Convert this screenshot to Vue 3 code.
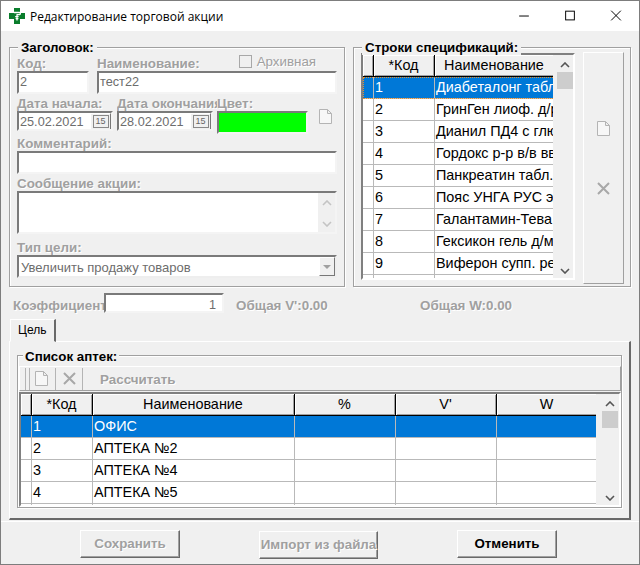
<script setup>
const specRows = [
  ['1', 'Диабеталонг табл. 30 мг'],
  ['2', 'ГринГен лиоф. д/р-ра'],
  ['3', 'Дианил ПД4 с глюкозой'],
  ['4', 'Гордокс р-р в/в введ.'],
  ['5', 'Панкреатин табл. п/о'],
  ['6', 'Пояс УНГА РУС эласт.'],
  ['7', 'Галантамин-Тева капс.'],
  ['8', 'Гексикон гель д/местн.'],
  ['9', 'Виферон супп. рект.'],
  ['', '']
]
const shopRows = [
  ['1', 'ОФИС'],
  ['2', 'АПТЕКА №2'],
  ['3', 'АПТЕКА №4'],
  ['4', 'АПТЕКА №5'],
  ['', '']
]
</script>

<template>
  <div class="window">
    <header class="titlebar">
      <svg class="app-icon" viewBox="0 0 16 16" width="16" height="16">
        <path d="M5 0h6v5h5v6h-5v5H5v-5H0V5h5z" fill="#0a7d2c" />
        <path d="M5 4.5h5.5c1.2 0 1.2 2.2 0 2.2H7.5M8 6.5v6M6.2 8.6h3.4M6.6 10.6h2.8" fill="none" stroke="#fff" stroke-width="1.3" />
      </svg>
      <span class="title">Редактирование торговой акции</span>
      <div class="caption">
        <svg viewBox="0 0 46 32" width="46" height="31"><path d="M18 15.5h10" stroke="#000" fill="none" /></svg>
        <svg viewBox="0 0 46 32" width="46" height="31"><rect x="18.5" y="10.5" width="9" height="9" stroke="#000" fill="none" /></svg>
        <svg viewBox="0 0 46 32" width="46" height="31"><path d="M18 10l10 10M28 10L18 20" stroke="#000" fill="none" /></svg>
      </div>
    </header>

    <div class="top">
      <section class="group head-group">
        <span class="legend">Заголовок:</span>
        <div class="row">
          <div class="field w72">
            <label class="lbl">Код:</label>
            <div class="edit">2</div>
          </div>
          <div class="field w240">
            <div class="name-label">
              <label class="lbl">Наименование:</label>
              <span class="archive"><i class="check"></i>Архивная</span>
            </div>
            <div class="edit">тест22</div>
          </div>
        </div>
        <div class="row dates">
          <div class="field w96">
            <label class="lbl">Дата начала:</label>
            <div class="edit date">25.02.2021<span class="cal"><b>15</b></span></div>
          </div>
          <div class="field w96">
            <label class="lbl nowrap">Дата окончания:</label>
            <div class="edit date">28.02.2021<span class="cal"><b>15</b></span></div>
          </div>
          <div class="field w91">
            <label class="lbl">Цвет:</label>
            <div class="edit colour"><span></span></div>
          </div>
          <svg class="doc doc-color" viewBox="0 0 13 15" width="13" height="15">
            <path d="M.5.5h8l4 4v10H.5zM8.5.5v4h4" fill="#f7f7f7" stroke="#b4b4b4" />
          </svg>
        </div>
        <div class="field">
          <label class="lbl">Комментарий:</label>
          <div class="edit"></div>
        </div>
        <div class="field">
          <label class="lbl">Сообщение акции:</label>
          <div class="edit memo">
            <span class="memo-text"></span>
            <span class="memo-bar">
              <svg viewBox="0 0 10 6" width="10" height="6"><path d="M1 5l4-4 4 4" fill="none" stroke="#c4c4c4" stroke-width="1.6" /></svg>
              <svg viewBox="0 0 10 6" width="10" height="6"><path d="M1 1l4 4 4-4" fill="none" stroke="#c4c4c4" stroke-width="1.6" /></svg>
            </span>
          </div>
        </div>
        <div class="field goal">
          <label class="lbl">Тип цели:</label>
          <div class="edit select">Увеличить продажу товаров<span class="drop"><i></i></span></div>
        </div>
      </section>

      <section class="group spec-group">
        <span class="legend">Строки спецификаций:</span>
        <div class="grid spec-grid">
          <div class="grid-body">
            <table>
              <colgroup><col class="c-ind" /><col class="c-code" /><col class="c-spec-name" /></colgroup>
              <thead><tr><th></th><th>*Код</th><th>Наименование</th></tr></thead>
              <tbody>
                <tr v-for="(r, i) in specRows" :key="i" :class="{ sel: i === 0, focus: i === 0 }">
                  <td></td><td>{{ r[0] }}</td><td>{{ r[1] }}</td>
                </tr>
              </tbody>
            </table>
          </div>
          <div class="vbar">
            <svg viewBox="0 0 10 6" width="10" height="6"><path d="M1 5l4-4 4 4" fill="none" stroke="#555" stroke-width="1.6" /></svg>
            <span class="thumb"></span>
            <svg class="down" viewBox="0 0 10 6" width="10" height="6"><path d="M1 1l4 4 4-4" fill="none" stroke="#555" stroke-width="1.6" /></svg>
          </div>
        </div>
        <div class="side-tools">
          <svg viewBox="0 0 13 15" width="13" height="15">
            <path d="M.5.5h8l4 4v10H.5zM8.5.5v4h4" fill="#f7f7f7" stroke="#b4b4b4" />
          </svg>
          <svg viewBox="0 0 13 13" width="13" height="13">
            <path d="M1 1l11 11M12 1L1 12" fill="none" stroke="#a8a8a8" stroke-width="2" />
          </svg>
        </div>
      </section>
    </div>

    <div class="coef-row">
      <label class="lbl coef-label">Коэффициент</label>
      <div class="edit coef">1</div>
      <span class="lbl total-v">Общая V':0.00</span>
      <span class="lbl total-w">Общая W:0.00</span>
    </div>

    <div class="tabs"><span class="tab">Цель</span></div>
    <section class="page">
      <div class="group shop-group">
        <span class="legend">Список аптек:</span>
        <div class="toolbar">
          <i class="grip"></i>
          <svg viewBox="0 0 13 15" width="13" height="15">
            <path d="M.5.5h8l4 4v10H.5zM8.5.5v4h4" fill="#f7f7f7" stroke="#b4b4b4" />
          </svg>
          <i class="sep"></i>
          <svg viewBox="0 0 13 13" width="13" height="13">
            <path d="M1 1l11 11M12 1L1 12" fill="none" stroke="#a8a8a8" stroke-width="2" />
          </svg>
          <i class="sep"></i>
          <span class="lbl calc">Рассчитать</span>
        </div>
        <div class="grid shop-grid">
          <div class="grid-body">
            <table>
              <colgroup><col class="c-ind" /><col class="c-code" /><col class="c-name" /><col class="c-num" /><col class="c-num" /><col class="c-num" /></colgroup>
              <thead><tr><th></th><th>*Код</th><th>Наименование</th><th>%</th><th>V'</th><th>W</th></tr></thead>
              <tbody>
                <tr v-for="(r, i) in shopRows" :key="i" :class="{ sel: i === 0 }">
                  <td></td><td>{{ r[0] }}</td><td>{{ r[1] }}</td><td></td><td></td><td></td>
                </tr>
              </tbody>
            </table>
          </div>
          <div class="vbar">
            <svg viewBox="0 0 10 6" width="10" height="6"><path d="M1 5l4-4 4 4" fill="none" stroke="#555" stroke-width="1.6" /></svg>
            <span class="thumb"></span>
            <svg class="down" viewBox="0 0 10 6" width="10" height="6"><path d="M1 1l4 4 4-4" fill="none" stroke="#555" stroke-width="1.6" /></svg>
          </div>
        </div>
      </div>
    </section>

    <footer class="footer">
      <button class="btn off w100" type="button">Сохранить</button>
      <button class="btn off w119 low" type="button">Импорт из файла</button>
      <button class="btn w100" type="button">Отменить</button>
    </footer>
  </div>
</template>

<style>
html, body { margin: 0; background: #f0f0f0; }
</style>

<style scoped>
.window {
  width: 640px;
  height: 565px;
  box-sizing: border-box;
  border: 1px solid #7d7d7d;
  background: #f0f0f0;
  font-family: "Liberation Sans", Arial, sans-serif;
  font-size: 14px;
  color: #000;
  overflow: hidden;
}
.titlebar {
  height: 30px;
  background: #fff;
  display: flex;
  align-items: center;
  padding-left: 8px;
}
.app-icon { flex: none; }
.title {
  margin-left: 5px;
  font-family: "Open Sans", sans-serif;
  font-size: 12px;
}
.caption { margin-left: auto; display: flex; }
.caption svg { display: block; }

.top { display: flex; gap: 8px; padding: 16px 8px 0; }
.group {
  position: relative;
  box-sizing: border-box;
  border: 1px solid #a0a0a0;
  box-shadow: inset 1px 1px 0 #fff, 1px 1px 0 #fff;
}
.legend {
  position: absolute;
  top: -8px;
  left: 8px;
  padding: 0 3px;
  line-height: 15px;
  font-size: 13.33px;
  font-weight: 700;
  background: #f0f0f0;
  white-space: nowrap;
}
.head-group {
  width: 336px;
  height: 240px;
  padding: 6px 7px 0;
}
.spec-group {
  width: 278px;
  height: 240px;
  display: flex;
  padding: 5px 6px 0 7px;
  gap: 8px;
}

.row { display: flex; gap: 8px; }
.dates { gap: 4px; }
.field { display: flex; flex-direction: column; min-width: 0; }
.w72 { width: 72px; }
.w240 { width: 240px; }
.w96 { width: 96px; }
.w91 { width: 91px; }
.goal { margin-top: 4px; }
.lbl {
  display: block;
  height: 17px;
  line-height: 20px;
  font-size: 13.4px;
  font-weight: 700;
  color: #a0a0a0;
  text-shadow: 1px 1px 0 #fff;
  white-space: nowrap;
}
.nowrap { overflow: hidden; width: 100px; }
.name-label { display: flex; }
.archive {
  display: flex;
  align-items: center;
  margin-left: 39px;
  height: 15px;
  font-size: 13.33px;
  color: #a0a0a0;
  text-shadow: 1px 1px 0 #fff;
  white-space: nowrap;
}
.check {
  width: 11px;
  height: 11px;
  margin-right: 5px;
  border: 1px solid #a8a8a8;
  background: #f0f0f0;
}
.edit {
  box-sizing: border-box;
  height: 23px;
  padding-left: 1px;
  background: #fff;
  border: 2px solid;
  border-color: #7a7a7a #f4f4f4 #f4f4f4 #7a7a7a;
  line-height: 19px;
  font-size: 12.7px;
  color: #6d6d6d;
  white-space: nowrap;
  overflow: hidden;
}
.date {
  position: relative;
  height: 20px;
  line-height: 18px;
}
.cal {
  position: absolute;
  right: 0;
  top: 0;
  width: 21px;
  height: 17px;
  background: #f0f0f0;
  border: 1px solid;
  border-color: #fff #777 #777 #fff;
  box-sizing: border-box;
  display: flex;
  align-items: center;
  justify-content: center;
}
.cal b {
  border: 1px solid #888;
  width: 14px;
  height: 11px;
  line-height: 11px;
  font-size: 9px;
  font-weight: 400;
  text-align: center;
  color: #666;
}
.colour { background: #f0f0f0; padding: 0; display: flex; }
.colour span { flex: 1; background: #00ff00; }
.doc-color { margin: 4px 0 0 7px; align-self: center; }
.memo { height: 43px; display: flex; padding: 0; }
.memo-text { flex: 1; }
.memo-bar {
  width: 17px;
  background: #f0f0f0;
  display: flex;
  flex-direction: column;
  align-items: center;
  justify-content: space-between;
  padding: 7px 0 5px;
  box-sizing: border-box;
}
.select {
  position: relative;
  padding-left: 2px;
  font-size: 13px;
  line-height: 21px;
  border-color: #7a7a7a #eee #eee #7a7a7a;
}
.drop {
  position: absolute;
  right: 0;
  top: 0;
  width: 16px;
  height: 19px;
  box-sizing: border-box;
  background: #f0f0f0;
  border: 1px solid;
  border-color: #fff #777 #777 #fff;
  display: flex;
  align-items: center;
  justify-content: center;
}
.drop i {
  border: 4px solid transparent;
  border-top-color: #a0a0a0;
  border-bottom: 0;
}

.grid {
  box-sizing: border-box;
  display: flex;
  background: #f0f0f0;
  border: 2px solid;
  border-color: #808080 #fff #fff #808080;
}
.spec-grid { width: 214px; height: 227px; flex: none; }
.grid-body { flex: 1; min-width: 0; overflow: hidden; background: #fff; }
table {
  border-collapse: separate;
  border-spacing: 0;
  table-layout: fixed;
  width: 100%;
  font-size: 14.4px;
}
.c-ind { width: 11px; }
.c-code { width: 61px; }
.c-spec-name { width: 120px; }
.c-name { width: 202px; }
.c-num { width: 101px; }
th, td {
  box-sizing: border-box;
  height: 22px;
  padding: 0 0 2px 1px;
  overflow: hidden;
  white-space: nowrap;
  border-right: 1px solid #b9b9b9;
  border-bottom: 1px solid #b9b9b9;
  line-height: 18px;
  text-align: left;
}
th {
  height: 22px;
  padding: 0 1px 2px 0;
  text-align: center;
  font-weight: 400;
  background: #f0f0f0;
  border-right: 1px solid #000;
  border-bottom: 1px solid #000;
  box-shadow: inset 1px 1px 0 #fff, inset -1px -1px 0 #a0a0a0;
}
td:first-child { background: #fff; }
.sel td, .sel td:first-child { background: #0078d7; color: #fff; }
.focus { outline: 1px dotted #e8902a; outline-offset: -1px; }
.vbar {
  position: relative;
  flex: none;
  width: 20px;
  background: #f0f0f0;
  display: flex;
  flex-direction: column;
  align-items: center;
  padding: 7px 0 0 3px;
  box-sizing: border-box;
}
.thumb {
  display: block;
  width: 16px;
  height: 17px;
  margin-top: 4px;
  background: #cdcdcd;
}
.vbar .down { margin-top: auto; margin-bottom: 4px; }
.side-tools {
  box-sizing: border-box;
  width: 41px;
  height: 232px;
  margin-top: -1px;
  border: 1px solid;
  border-color: #fff #a0a0a0 #a0a0a0 #fff;
  display: flex;
  flex-direction: column;
  align-items: center;
  padding-top: 68px;
  gap: 46px;
}

.coef-row {
  position: relative;
  display: flex;
  padding: 6px 0 0 12px;
  height: 20px;
}
.coef-label { width: 91px; line-height: 25px; }
.coef {
  width: 120px;
  height: 20px;
  line-height: 21px;
  text-align: right;
  padding-right: 6px;
}
.total-v { margin-left: 12px; line-height: 25px; width: 184px; }
.total-w { line-height: 25px; }

.tabs { height: 22px; padding: 6px 0 0 9px; box-sizing: content-box; }
.tab {
  display: block;
  box-sizing: border-box;
  width: 46px;
  height: 23px;
  padding-left: 7px;
  font-size: 12px;
  line-height: 20px;
  background: #f0f0f0;
  border: 1px solid;
  border-color: #fff #696969 transparent #fff;
  border-right-width: 2px;
  position: relative;
  z-index: 1;
}
.page {
  box-sizing: border-box;
  width: 622px;
  height: 179px;
  margin-left: 8px;
  border: 2px solid;
  border-width: 1px 2px 2px 1px;
  border-color: #fff #696969 #696969 #fff;
  padding: 13px 0 0 7px;
}
.shop-group { width: 605px; height: 153px; padding: 10px 0 0 1px; }
.shop-group .legend { left: 5px; padding: 0 2px; top: -7px; }
.toolbar {
  box-sizing: border-box;
  width: 602px;
  height: 25px;
  display: flex;
  align-items: center;
  border: 1px solid;
  border-color: #fff #a0a0a0 #a0a0a0 #fff;
  padding-left: 5px;
}
.grip {
  width: 3px;
  height: 22px;
  margin-right: 5px;
  border-left: 1px solid #b4b4b4;
  border-right: 1px solid #b4b4b4;
}
.sep {
  width: 1px;
  height: 22px;
  margin: 0 7px;
  background: #b4b4b4;
}
.toolbar .sep:last-of-type { margin: 0 17px 0 6px; }
.calc { line-height: 19px; }
.shop-grid { width: 602px; height: 115px; margin-top: 1px; }
.shop-grid .vbar { width: 23px; padding-left: 5px; }

.footer {
  margin-top: 1px;
  padding: 8px 0 0 79px;
  display: flex;
  gap: 79px;
  border-top: 1px solid #fff;
  align-items: flex-start;
}
.btn {
  box-sizing: border-box;
  height: 28px;
  padding: 0 0 1px;
  background: #f0f0f0;
  border: 1px solid;
  border-color: #fff #696969 #696969 #fff;
  box-shadow: inset -1px -1px 0 #a0a0a0;
  font: 700 13.33px "Liberation Sans", Arial, sans-serif;
  color: #000;
  white-space: nowrap;
}
.low { margin-top: 1px; }
.w100 { width: 100px; }
.w119 { width: 119px; }
.off { color: #a0a0a0; text-shadow: 1px 1px 0 #fff; }
</style>
